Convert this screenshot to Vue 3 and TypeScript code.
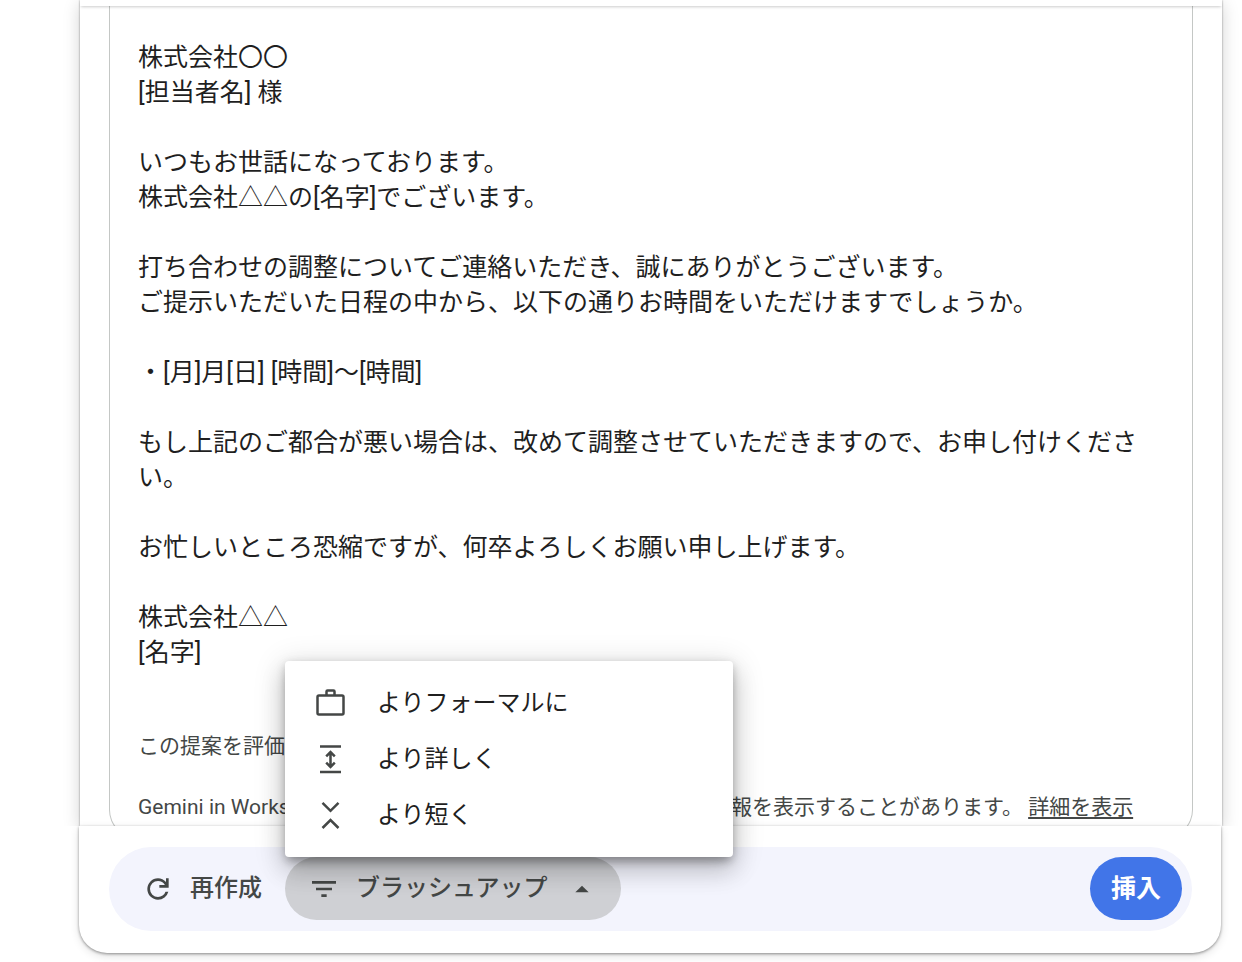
<script setup lang="ts">
import { ref } from 'vue'

interface RefineOption {
  id: string
  label: string
}

const paragraphs: string[][] = [
  ['株式会社〇〇', '[担当者名] 様'],
  ['いつもお世話になっております。', '株式会社△△の[名字]でございます。'],
  [
    '打ち合わせの調整についてご連絡いただき、誠にありがとうございます。',
    'ご提示いただいた日程の中から、以下の通りお時間をいただけますでしょうか。',
  ],
  ['・[月]月[日] [時間]～[時間]'],
  ['もし上記のご都合が悪い場合は、改めて調整させていただきますので、お申し付けください。'],
  ['お忙しいところ恐縮ですが、何卒よろしくお願い申し上げます。'],
  ['株式会社△△', '[名字]'],
]

const options: RefineOption[] = [
  { id: 'formal', label: 'よりフォーマルに' },
  { id: 'elaborate', label: 'より詳しく' },
  { id: 'shorten', label: 'より短く' },
]

const menuOpen = ref(true)
</script>

<template>
  <div class="page">
    <main class="panel">
      <div class="panel-head"></div>
      <div class="scroll">
        <article class="card">
          <p v-for="(lines, i) in paragraphs" :key="i" class="paragraph">
            <template v-for="(line, j) in lines" :key="j"><br v-if="j > 0" />{{ line }}</template>
          </p>
          <p class="rate">この提案を評価</p>
          <p class="notice">
            <span>Gemini in Workspace</span>
            <span>
              の提案では、不正確、または不適切な情報を表示することがあります。
              <a href="#">詳細を表示</a>
            </span>
          </p>
        </article>
      </div>
    </main>

    <div class="footer-area">
      <footer class="footer">
        <div class="toolbar">
          <button type="button" class="tool">
            <svg class="icon" viewBox="0 0 24 24" aria-hidden="true">
              <path
                d="M12 20q-3.35 0-5.675-2.325T4 12t2.325-5.675T12 4q1.725 0 3.3.713T18 6.75V4h2v7h-7V9h4.2q-.8-1.4-2.188-2.2T12 6Q9.5 6 7.75 7.75T6 12t1.750 4.250T12 18q1.925 0 3.475-1.100T17.650 14h2.100q-.7 2.650-2.850 4.325T12 20"
              />
            </svg>
            <span>再作成</span>
          </button>

          <div class="refine">
            <button
              type="button"
              class="tool tool-active"
              aria-haspopup="menu"
              :aria-expanded="menuOpen"
              @click="menuOpen = !menuOpen"
            >
              <svg class="icon" viewBox="0 0 24 24" aria-hidden="true">
                <path d="M10 18h4v-2h-4zM3 6v2h18V6zm3 7h12v-2H6z" />
              </svg>
              <span>ブラッシュアップ</span>
              <svg class="icon caret" viewBox="0 0 24 24" aria-hidden="true">
                <path d="M7 14.500l5-5 5 5z" />
              </svg>
            </button>

            <div v-if="menuOpen" class="menu" role="menu">
              <button v-for="o in options" :key="o.id" type="button" class="item" role="menuitem">
                <svg class="item-icon" viewBox="0 0 30 30" aria-hidden="true">
                  <template v-if="o.id === 'formal'">
                    <rect x="1.500" y="7.500" width="26" height="19" rx="1.500" />
                    <path d="M10.500 7.500V3.500q0-1 1-1h6q1 0 1 1v4" />
                  </template>
                  <template v-else-if="o.id === 'elaborate'">
                    <path d="M4 2.500h21M4 28h21M14.500 8v15M10.200 12.300l4.300-4.300 4.300 4.300M10.200 18.700l4.300 4.300 4.300-4.300" />
                  </template>
                  <path v-else d="M6.500 2.800l8 8 8-8M6.500 28l8-8 8 8" />
                </svg>
                <span>{{ o.label }}</span>
              </button>
            </div>
          </div>

          <button type="button" class="insert">挿入</button>
        </div>
      </footer>
    </div>
  </div>
</template>

<style>
body {
  margin: 0;
  background: #fff;
}
</style>

<style scoped>
.page {
  display: flex;
  flex-direction: column;
  height: 100vh;
  overflow: hidden;
  color: #1f1f1f;
  font-family: Roboto, 'Noto Sans CJK JP', sans-serif;
  font-size: 25px;
  line-height: 35px;
}

.panel {
  display: flex;
  flex: 1;
  flex-direction: column;
  min-height: 0;
  margin: 0 20px 0 80px;
  background: #fff;
  box-shadow: 0 0 2px rgba(0, 0, 0, 0.4), 0 4px 16px rgba(0, 0, 0, 0.18);
}

.panel-head {
  position: relative;
  z-index: 1;
  flex: none;
  height: 6px;
  background: #fff;
  box-shadow: 0 2px 3px -1px rgba(0, 0, 0, 0.2);
}

.scroll {
  flex: 1;
  min-height: 0;
  overflow: hidden;
}

.card {
  margin: 0 29px;
  padding: 34px 28px 15px;
  border: 1px solid #c4c7c5;
  border-top: 0;
  border-radius: 0 0 28px 28px;
}

.paragraph {
  margin: 0 0 35px;
}

.rate,
.notice {
  margin: 0;
  color: #444746;
  font-size: 21px;
  line-height: 30px;
}

.rate {
  padding-top: 26px;
}

.notice {
  display: flex;
  gap: 18px;
  padding-top: 31px;
  white-space: nowrap;
}

.notice a {
  color: inherit;
  text-decoration: underline;
  text-decoration-thickness: 2px;
  text-underline-offset: 3px;
}

.footer-area {
  position: relative;
  flex: none;
  padding: 0 21px 9px 79px;
  background: #fff;
}

.footer {
  padding: 21px 29px 22px 30px;
  background: #fff;
  border-radius: 0 0 28px 28px;
  box-shadow: 0 1px 3px rgba(0, 0, 0, 0.4), 0 3px 10px rgba(0, 0, 0, 0.12);
}

.toolbar {
  display: flex;
  align-items: center;
  padding: 10px 10px 11px;
  background: #f3f4fd;
  border-radius: 42px;
}

button {
  margin: 0;
  padding: 0;
  border: 0;
  background: none;
  color: inherit;
  font: inherit;
  cursor: pointer;
}

.tool {
  display: flex;
  align-items: center;
  gap: 16px;
  height: 63px;
  padding: 0 23px;
  border-radius: 32px;
  color: #444746;
  font-size: 24px;
  font-weight: 500;
  white-space: nowrap;
}

.tool-active {
  min-width: 336px;
  background: #cfd0d4;
}

.refine {
  position: relative;
}

.icon {
  flex: none;
  width: 32px;
  height: 32px;
  fill: currentColor;
}

.caret {
  margin-left: auto;
}

.insert {
  height: 63px;
  margin-left: auto;
  padding: 0 21px;
  border-radius: 32px;
  background: #4175e8;
  color: #fff;
  font-weight: 700;
}

.menu {
  position: absolute;
  bottom: 100%;
  left: 0;
  box-sizing: border-box;
  width: 448px;
  padding: 14px 0;
  border-radius: 4px;
  background: #fff;
  box-shadow: 0 9px 10px -5px rgba(0, 0, 0, 0.2), 0 14px 24px 2px rgba(0, 0, 0, 0.14),
    0 5px 30px 4px rgba(0, 0, 0, 0.12), 0 3px 10px rgba(0, 0, 0, 0.2);
}

.item {
  display: flex;
  align-items: center;
  gap: 31px;
  width: 100%;
  height: 56px;
  padding: 0 31px;
  font-size: 24px;
  text-align: left;
}

.item-icon {
  flex: none;
  width: 30px;
  height: 30px;
  fill: none;
  stroke: #444746;
  stroke-width: 2.500;
}
</style>
